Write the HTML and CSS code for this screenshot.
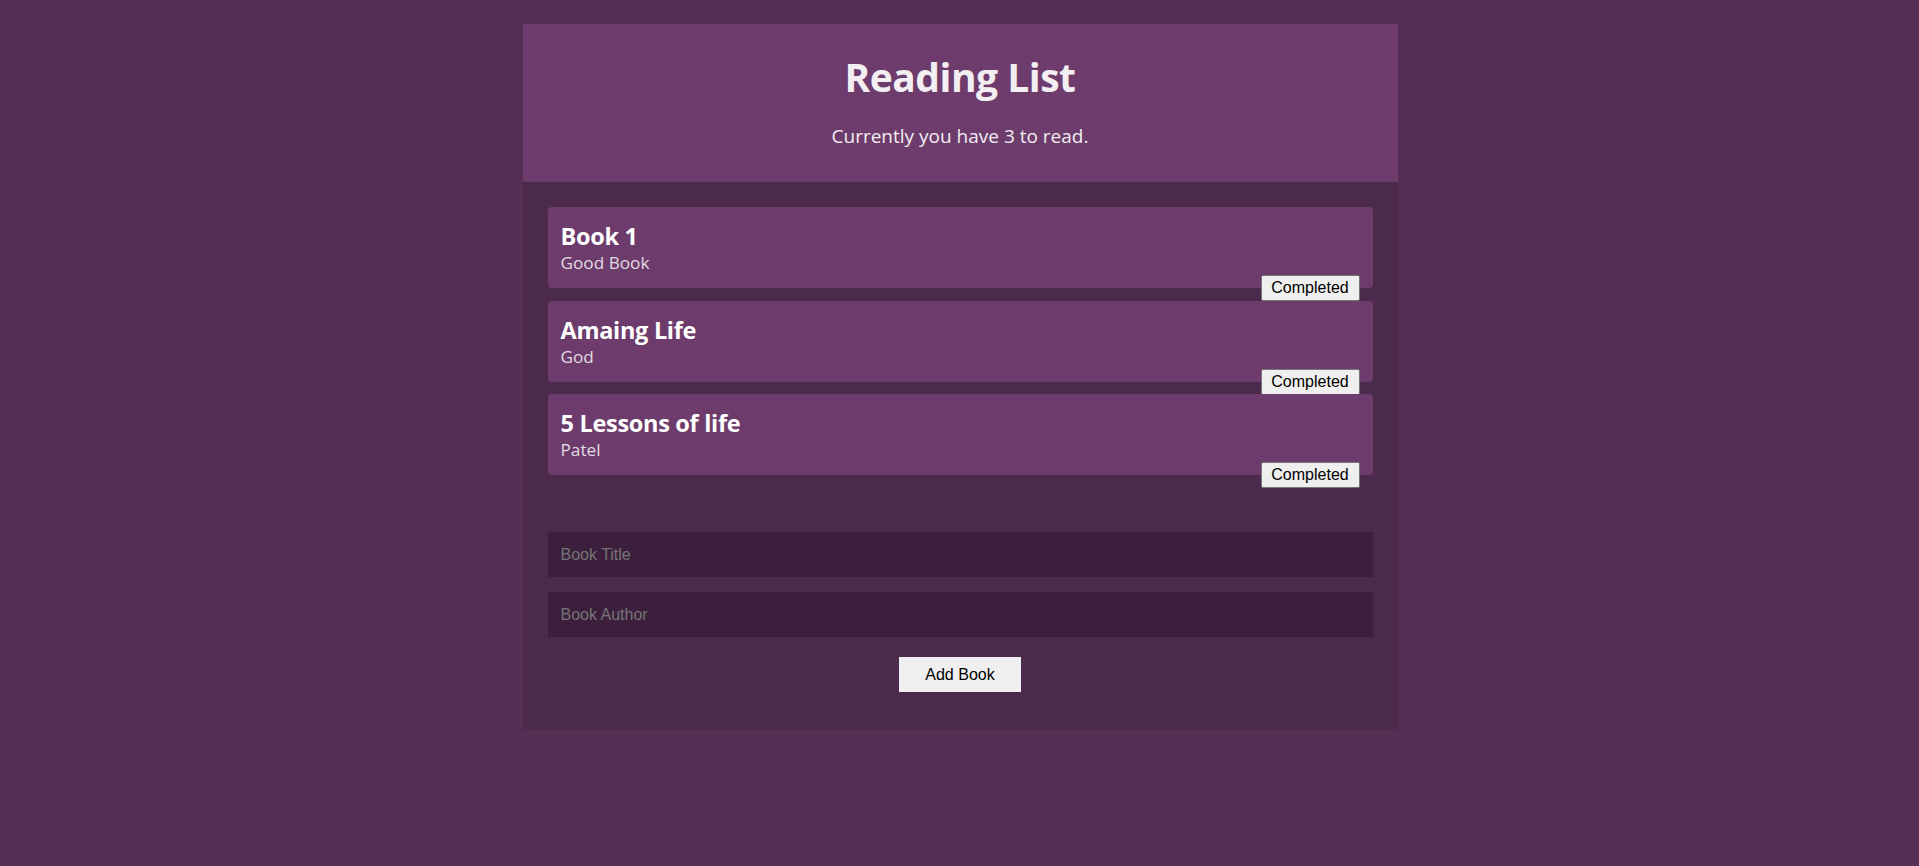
FILE: index.html
```html
<!DOCTYPE html>
<html lang="en">
<head>
<meta charset="utf-8">
<title>Reading List</title>
<link rel="stylesheet" href="styles.css">
</head>
<body>
<div class="app">
  <header class="header">
    <h1 class="title">Reading List</h1>
    <p class="subtitle">Currently you have 3 to read.</p>
  </header>
  <main class="main">
    <ul class="books">
      <li class="book">
        <h3 class="book-title">Book 1</h3>
        <p class="book-author">Good Book</p>
        <button class="done-btn">Completed</button>
      </li>
      <li class="book">
        <h3 class="book-title">Amaing Life</h3>
        <p class="book-author">God</p>
        <button class="done-btn">Completed</button>
      </li>
      <li class="book">
        <h3 class="book-title">5 Lessons of life</h3>
        <p class="book-author">Patel</p>
        <button class="done-btn">Completed</button>
      </li>
    </ul>
    <form class="form">
      <input class="field" type="text" placeholder="Book Title">
      <input class="field" type="text" placeholder="Book Author">
      <button class="add-btn" type="button">Add Book</button>
    </form>
  </main>
</div>
</body>
</html>
```

FILE: styles.css
```css
* { box-sizing: border-box; }

body {
  margin: 0;
  padding-left: 1px;
  background: #542f53;
  font-family: "Open Sans", "Noto Sans", sans-serif;
  color: #eee;
}

.app {
  width: 875px;
  margin: 24px auto 0;
}

.header {
  background: #6d3c6c;
  height: 158px;
  display: flex;
  flex-direction: column;
  align-items: center;
  padding-top: 22px;
}

.title {
  margin: 0;
  font-size: 39px;
  font-weight: 700;
  line-height: 62px;
  color: #f2eef2;
  letter-spacing: -0.5px;
}

.subtitle {
  margin: 0;
  margin-top: 15px;
  font-size: 19px;
  line-height: 26px;
  color: #f2eef2;
}

.main {
  background: #4c2a4c;
  padding: 25px 25px 38px;
}

.books {
  list-style: none;
  margin: 0;
  padding: 0;
  display: flex;
  flex-direction: column;
  gap: 12.5px;
}

.book {
  position: relative;
  background: #6d3c6c;
  border-radius: 4px;
  height: 81px;
  padding: 14px 13px;
}

.book-title {
  margin: 0;
  font-size: 23.5px;
  font-weight: 700;
  line-height: 30px;
  color: #fff;
  letter-spacing: -0.3px;
}

.book-author {
  margin: 0;
  font-size: 17.2px;
  line-height: 24px;
  color: #e2dbe2;
}

.done-btn {
  position: absolute;
  right: 13px;
  bottom: -13px;
  width: 99px;
  height: 26px;
  padding: 0;
  font-family: "Liberation Sans", Arial, sans-serif;
  font-size: 16px;
  color: #000;
  background: #efefef;
  border: 1px solid #767676;
  border-radius: 2px;
}

.form {
  margin-top: 57px;
  display: flex;
  flex-direction: column;
  align-items: center;
  gap: 15px;
}

.field {
  width: 100%;
  height: 45px;
  border: none;
  background: #3c1f3c;
  padding: 0 13px;
  font-family: "Liberation Sans", Arial, sans-serif;
  font-size: 16px;
  color: #eee;
  outline: none;
}

.field::placeholder {
  color: #757575;
}

.add-btn {
  margin-top: 5px;
  width: 122px;
  height: 35px;
  border: none;
  background: #efefef;
  font-family: "Liberation Sans", Arial, sans-serif;
  font-size: 16px;
  color: #000;
}
```
